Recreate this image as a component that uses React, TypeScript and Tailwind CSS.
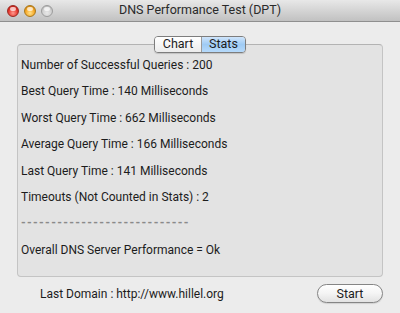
const STATS = [
  "Number of Successful Queries : 200",
  "Best Query Time : 140 Milliseconds",
  "Worst Query Time : 662 Milliseconds",
  "Average Query Time : 166 Milliseconds",
  "Last Query Time : 141 Milliseconds",
  "Timeouts (Not Counted in Stats) : 2",
  "----------------------------",
  "Overall DNS Server Performance = Ok",
];

function TrafficLight({ tone }: { tone: "red" | "amber" | "off" }) {
  const fill =
    tone === "red"
      ? "bg-[radial-gradient(circle_at_50%_70%,#ff9a8f_0%,#e5352b_55%,#a8150f_100%)] border-[#9b2a23]"
      : tone === "amber"
        ? "bg-[radial-gradient(circle_at_50%_70%,#ffe08a_0%,#f5a623_55%,#b86e08_100%)] border-[#a8781c]"
        : "bg-[radial-gradient(circle_at_50%_70%,#e8e8e8_0%,#cfcfcf_55%,#a9a9a9_100%)] border-[#9c9c9c]";
  return (
    <span className={`relative block h-[12px] w-[12px] rounded-full border ${fill}`}>
      <span className="absolute left-[2px] top-[1px] h-[4px] w-[6px] rounded-full bg-white/70" />
    </span>
  );
}

export default function App() {
  return (
    <div className="flex h-[313px] w-[400px] flex-col bg-[#ececec] font-['Roboto','Lucida_Grande',sans-serif] text-[12px] text-[#1c1c1c]">
      <div className="relative flex h-[22px] items-center border-b border-[#8f8f8f] bg-gradient-to-b from-[#e8e8e8] to-[#c1c1c1]">
        <div className="flex items-center gap-[5px] pl-[7px] pt-[1px]">
          <TrafficLight tone="red" />
          <TrafficLight tone="amber" />
          <TrafficLight tone="off" />
        </div>
        <div className="absolute inset-x-0 top-0 flex h-[21px] items-center justify-center text-[12.5px] text-[#2a2a2a]">
          DNS Performance Test (DPT)
        </div>
      </div>

      <div className="px-[17px] pt-[22px]">
        <div className="relative h-[233px] rounded-[4px] border border-[#c4c4c4] border-t-[#b3b3b3] bg-[#e3e3e3] pt-[7px] pl-[3px]">
          <div className="absolute -top-[9px] left-1/2 flex h-[17px] -translate-x-1/2 overflow-hidden rounded-[4px] border border-[#7d7d7d] shadow-[0_1px_1px_rgba(0,0,0,0.15)]">
            <div className="flex w-[47px] items-center justify-center border-r border-[#9a9a9a] bg-gradient-to-b from-white to-[#ececec] text-[12.5px]">
              Chart
            </div>
            <div className="flex w-[43px] items-center justify-center bg-gradient-to-b from-[#cfe5fb] via-[#9fcbf4] to-[#b6dafb] text-[12.5px]">
              Stats
            </div>
          </div>
          {STATS.map((line, i) => (
            <div
              key={i}
              className={`h-[26.4px] leading-[26.4px] ${i === 6 ? "font-bold tracking-[1.3px] text-[#8a8a8a]" : ""}`}
            >
              {line}
            </div>
          ))}
        </div>

        <div className="mt-[7px] flex h-[19px] items-center justify-between">
          <span className="pl-[23px] pt-[1px]">Last Domain : http://www.hillel.org</span>
          <button className="h-[19px] w-[66px] rounded-full border border-[#858585] bg-gradient-to-b from-white via-[#f4f4f4] to-[#e2e2e2] text-[12.5px] leading-[17px] text-[#1c1c1c] shadow-[0_1px_1px_rgba(0,0,0,0.12)]">
            Start
          </button>
        </div>
      </div>
    </div>
  );
}
